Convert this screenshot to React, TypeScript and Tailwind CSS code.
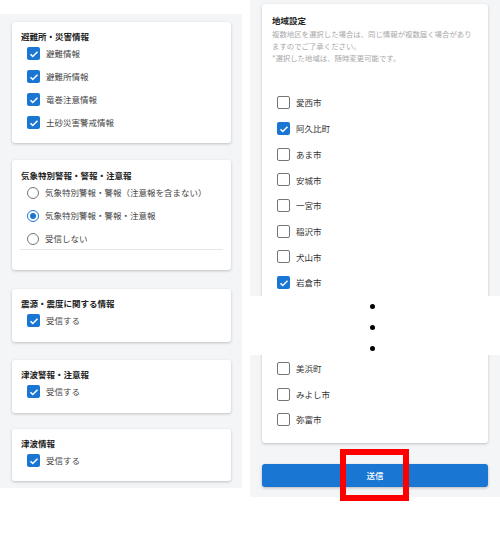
import React from 'react';

const FONT = "font-['Noto_Sans_CJK_JP','Noto_Sans',sans-serif]";

const Check = ({ checked }: { checked: boolean }) =>
  checked ? (
    <span className="w-[13px] h-[13px] rounded-[2px] bg-[#1976d2] flex items-center justify-center shrink-0">
      <svg viewBox="0 0 24 24" className="w-[12px] h-[12px]" fill="none" stroke="#fff" strokeWidth="3">
        <path d="M5 12.5l4.5 4.5L19 7.5" />
      </svg>
    </span>
  ) : (
    <span className="w-[13px] h-[13px] rounded-[2px] border-[1.5px] border-[#757575] bg-white shrink-0" />
  );

const Radio = ({ checked }: { checked: boolean }) => (
  <span
    className={`w-[12px] h-[12px] rounded-full border-[1.5px] flex items-center justify-center shrink-0 ${
      checked ? 'border-[#1976d2]' : 'border-[#757575]'
    }`}
  >
    {checked && <span className="w-[6px] h-[6px] rounded-full bg-[#1976d2]" />}
  </span>
);

const Card = ({ className = '', children }: { className?: string; children: React.ReactNode }) => (
  <div className={`bg-white rounded-[3px] shadow-[0_1px_3px_rgba(0,0,0,0.22)] ${className}`}>{children}</div>
);

const Title = ({ children }: { children: React.ReactNode }) => (
  <div className="h-[12px] pl-[9px] flex items-center text-[8.5px] font-bold text-[#222] leading-none">{children}</div>
);

const CheckRow = ({ label, checked = true }: { label: string; checked?: boolean }) => (
  <div className="h-[23px] pl-[15px] flex items-center gap-[6px] text-[8.5px] text-[#444]">
    <Check checked={checked} />
    <span>{label}</span>
  </div>
);

const RadioRow = ({ label, checked = false }: { label: string; checked?: boolean }) => (
  <div className="h-[23px] pl-[15px] flex items-center gap-[6px] text-[8.5px] text-[#444]">
    <Radio checked={checked} />
    <span>{label}</span>
  </div>
);

const AreaRow = ({ label, checked = false }: { label: string; checked?: boolean }) => (
  <div className="h-[25.7px] pl-[15px] flex items-center gap-[6px] text-[8.5px] text-[#333]">
    <Check checked={checked} />
    <span>{label}</span>
  </div>
);

const areasTop = [
  { name: '愛西市', on: false },
  { name: '阿久比町', on: true },
  { name: 'あま市', on: false },
  { name: '安城市', on: false },
  { name: '一宮市', on: false },
  { name: '稲沢市', on: false },
  { name: '犬山市', on: false },
  { name: '岩倉市', on: true },
];

const areasBottom = ['美浜町', 'みよし市', '弥富市'];

export default function App() {
  return (
    <div className={`relative w-[500px] h-[558px] bg-white overflow-hidden ${FONT}`}>
      <div className="flex items-start gap-[8px]">
        {/* left: notification types */}
        <div className="w-[242px] mt-[14px] bg-[#f4f5f7] pt-[8px] pl-[12px] pr-[11px] pb-[7px]">
          <Card className="h-[121px] pt-[8px]">
            <Title>避難所・災害情報</Title>
            <CheckRow label="避難情報" />
            <CheckRow label="避難所情報" />
            <CheckRow label="竜巻注意情報" />
            <CheckRow label="土砂災害警戒情報" />
          </Card>

          <Card className="h-[110px] pt-[9px] mt-[17px]">
            <Title>気象特別警報・警報・注意報</Title>
            <RadioRow label="気象特別警報・警報（注意報を含まない）" />
            <RadioRow label="気象特別警報・警報・注意報" checked />
            <RadioRow label="受信しない" />
            <div className="mx-[8px] mt-[-1px] h-px bg-[#e6e6e6]" />
          </Card>

          <Card className="h-[53px] pt-[8px] mt-[19px]">
            <Title>震源・震度に関する情報</Title>
            <CheckRow label="受信する" />
          </Card>

          <Card className="h-[53px] pt-[8px] mt-[18px]">
            <Title>津波警報・注意報</Title>
            <CheckRow label="受信する" />
          </Card>

          <Card className="h-[52px] pt-[8px] mt-[16px]">
            <Title>津波情報</Title>
            <CheckRow label="受信する" />
          </Card>
        </div>

        {/* right: area settings */}
        <div className="w-[250px] bg-[#f4f5f7] pt-[4px] px-[12px] pb-[10px]">
          <Card className="h-[439px] pt-[10px]">
            <div className="h-[12px] pl-[10px] flex items-center text-[8.5px] font-bold text-[#222] leading-none">
              地域設定
            </div>
            <div className="mt-[2px] pl-[10px] pr-[14px] text-[7.4px] leading-[12px] text-[#a8a8a8]">
              <p>複数地区を選択した場合は、同じ情報が複数届く場合がありますのでご了承ください。</p>
              <p>*選択した地域は、随時変更可能です。</p>
            </div>
            <div className="mt-[26px]">
              {areasTop.map((a) => (
                <AreaRow key={a.name} label={a.name} checked={a.on} />
              ))}
            </div>
            <div className="mt-[60px]">
              {areasBottom.map((a) => (
                <AreaRow key={a} label={a} />
              ))}
            </div>
          </Card>
          <button className="mt-[21px] w-full h-[23px] rounded-[3px] bg-[#1976d2] text-white text-[8.5px] font-medium shadow-[0_1px_3px_rgba(0,0,0,0.25)] flex items-center justify-center">
            送信
          </button>
        </div>
      </div>

      {/* omitted rows marker */}
      <div className="absolute left-[243px] top-[296px] w-[257px] h-[59px] bg-white flex flex-col items-center justify-center gap-[16px] pl-[1px] pt-[3px]">
        <span className="w-[5px] h-[5px] rounded-full bg-black" />
        <span className="w-[5px] h-[5px] rounded-full bg-black" />
        <span className="w-[5px] h-[5px] rounded-full bg-black" />
      </div>

      {/* highlight box */}
      <div className="absolute left-[340px] top-[449px] w-[69px] h-[52px] border-[6px] border-[#ff0000]" />
    </div>
  );
}
